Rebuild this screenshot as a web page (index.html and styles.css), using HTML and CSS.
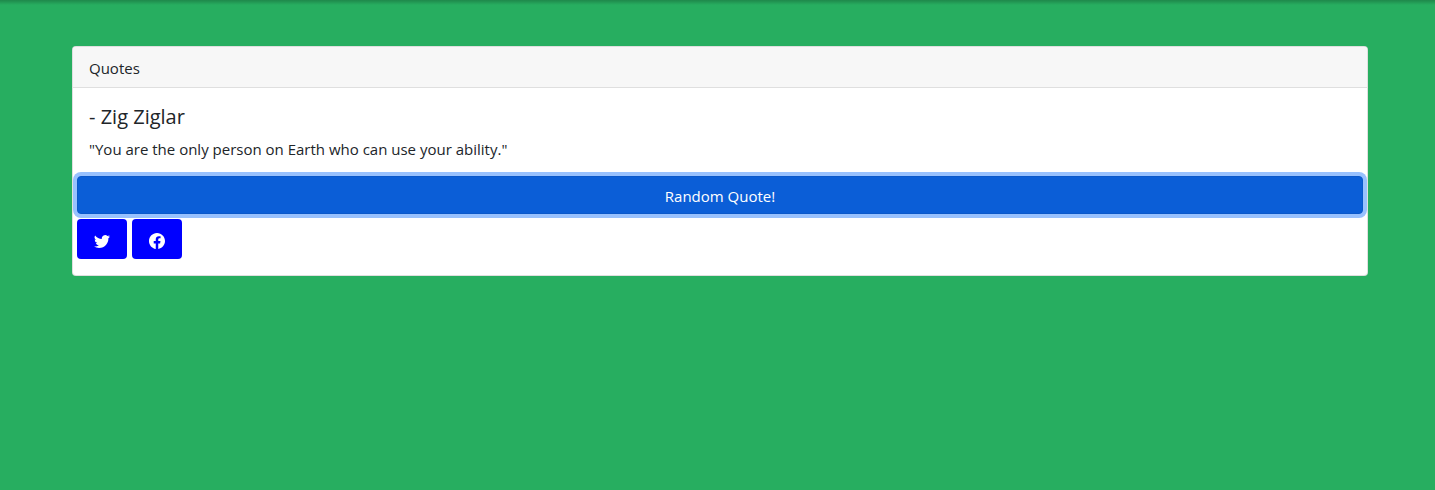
FILE: index.html
```html
<!DOCTYPE html>
<html lang="en">
<head>
<meta charset="utf-8">
<title>Quotes</title>
<link rel="stylesheet" href="styles.css">
</head>
<body>
<main class="page">
  <article class="card">
    <header class="card-header">Quotes</header>
    <div class="card-body">
      <h5 class="author">- Zig Ziglar</h5>
      <p class="quote">"You are the only person on Earth who can use your ability."</p>
    </div>
    <div class="actions">
      <button class="random" type="button">Random Quote!</button>
      <div class="share">
        <a class="social" href="#" aria-label="Share on Twitter">
          <svg class="icon" viewBox="0 0 16 16" aria-hidden="true"><path d="M5.026 15c6.038 0 9.341-5.003 9.341-9.334 0-.14 0-.282-.006-.422A6.685 6.685 0 0 0 16 3.542a6.658 6.658 0 0 1-1.889.518 3.301 3.301 0 0 0 1.447-1.817 6.533 6.533 0 0 1-2.087.793A3.286 3.286 0 0 0 7.875 6.03a9.325 9.325 0 0 1-6.767-3.429 3.289 3.289 0 0 0 1.018 4.382A3.323 3.323 0 0 1 .64 6.575v.045a3.288 3.288 0 0 0 2.632 3.218 3.203 3.203 0 0 1-.865.115 3.23 3.23 0 0 1-.614-.057 3.283 3.283 0 0 0 3.067 2.277A6.588 6.588 0 0 1 .78 13.58a6.32 6.32 0 0 1-.78-.045A9.344 9.344 0 0 0 5.026 15z"/></svg>
        </a>
        <a class="social" href="#" aria-label="Share on Facebook">
          <svg class="icon" viewBox="0 0 16 16" aria-hidden="true"><path d="M16 8.049c0-4.446-3.582-8.05-8-8.05C3.58 0-.002 3.603-.002 8.05c0 4.017 2.926 7.347 6.75 7.951v-5.625h-2.03V8.05H6.75V6.275c0-2.017 1.195-3.131 3.022-3.131.876 0 1.791.157 1.791.157v1.98h-1.009c-.993 0-1.303.621-1.303 1.258v1.51h2.218l-.354 2.326H9.25V16c3.824-.604 6.75-3.934 6.75-7.951z"/></svg>
        </a>
      </div>
    </div>
  </article>
</main>
</body>
</html>
```
FILE: styles.css
```css
* {
  box-sizing: border-box;
}

body {
  margin: 0;
  min-height: 100vh;
  background: linear-gradient(rgba(0, 0, 0, 0.22), rgba(0, 0, 0, 0) 5px) no-repeat #27ae60;
  color: #212529;
  font-family: "Segoe UI", "Open Sans", "Noto Sans", sans-serif;
  font-size: 15px;
  line-height: 24px;
}

.page {
  padding: 46px 67px 46px 72px;
}

.card {
  background: #fff;
  border: 1px solid rgba(0, 0, 0, 0.125);
  border-radius: 4px;
}

.card-header {
  padding: 9px 16px 7px;
  background: #f7f7f7;
  border-bottom: 1px solid #dfdfdf;
  border-radius: 3px 3px 0 0;
}

.card-body {
  padding: 17px 16px 15px;
}

.author {
  margin: 0 0 8px;
  font-size: 20px;
  font-weight: 400;
  line-height: 24px;
}

.quote {
  margin: 0;
}

.actions {
  display: flex;
  flex-direction: column;
  gap: 5px;
  padding: 0 4px 16px;
}

.random {
  height: 38px;
  padding: 2px 12px 0;
  border: 1px solid #0a58ca;
  border-radius: 4px;
  outline: none;
  background: #0b5ed7;
  box-shadow: 0 0 0 4px #98c1fe;
  color: #fff;
  font: inherit;
}

.share {
  display: flex;
  gap: 5px;
}

.social {
  display: flex;
  padding: 14px 17px 10px;
  border-radius: 4px;
  background: #00f;
  color: #fff;
}

.icon {
  display: block;
  width: 16px;
  height: 16px;
  fill: currentColor;
}
```
